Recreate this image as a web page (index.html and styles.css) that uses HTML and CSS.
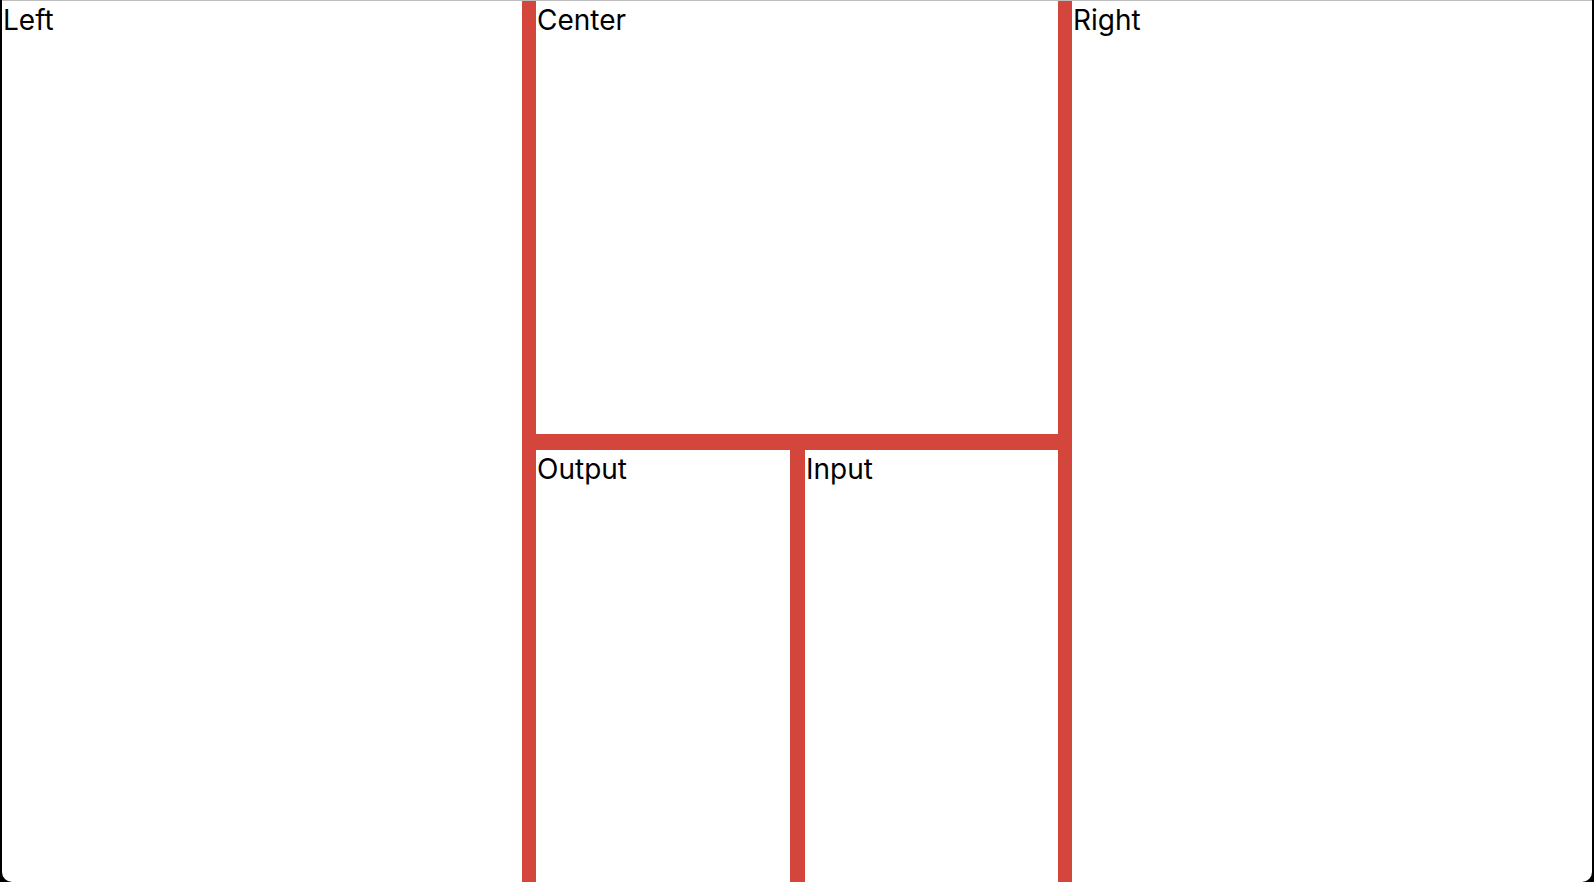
FILE: index.html
```html
<!DOCTYPE html>
<html>
<head>
<meta charset="utf-8">
<title>Panes</title>
<link rel="stylesheet" href="styles.css">
</head>
<body>
<div class="window">
  <div class="pane">Left</div>
  <div class="vbar"></div>
  <div class="center">
    <div class="pane">Center</div>
    <div class="hbar"></div>
    <div class="bottom">
      <div class="pane">Output</div>
      <div class="vbar"></div>
      <div class="pane">Input</div>
    </div>
  </div>
  <div class="vbar"></div>
  <div class="pane">Right</div>
</div>
</body>
</html>
```
FILE: styles.css
```css
html, body {
  margin: 0;
  padding: 0;
  background: #000;
  height: 882px;
  overflow: hidden;
}
.window {
  margin-left: 2px;
  width: 1590px;
  height: 881px;
  background: #fff;
  border-top: 1px solid #bdbdbd;
  border-radius: 0 0 10px 10px;
  display: grid;
  grid-template-columns: 520px 14px 522px 14px 520px;
  overflow: hidden;
}
.pane {
  font-family: Inter, "Noto Sans", sans-serif;
  font-size: 28px;
  color: #000;
  padding-top: 3px;
  padding-left: 1px;
  line-height: 1.21;
}
.vbar {
  background: #d4463b;
}
.hbar {
  background: #d4463b;
}
.center {
  display: grid;
  grid-template-rows: 433px 16px 1fr;
}
.bottom {
  display: grid;
  grid-template-columns: 254px 15px 1fr;
}
```
